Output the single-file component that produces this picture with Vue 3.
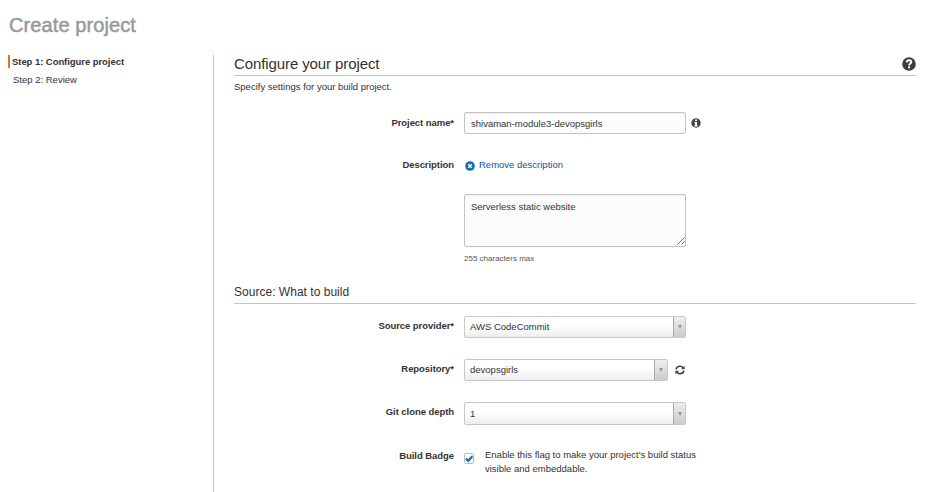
<script setup>
import { ref } from 'vue'

const projectName = ref('shivaman-module3-devopsgirls')
const description = ref('Serverless static website')
const badge = ref(true)
</script>

<template>
  <div class="page">
    <h1>Create project</h1>
    <div class="columns">
      <nav class="steps">
        <div class="step active">Step 1: Configure project</div>
        <div class="step">Step 2: Review</div>
      </nav>
      <main>
        <header class="section-head">
          <h2>Configure your project</h2>
          <svg class="help" viewBox="0 0 14 14">
            <circle cx="7" cy="7" r="6.8" fill="#3d3d3d" />
            <path d="M4.700 5.400C4.800 3.900 5.700 3.300 7 3.300c1.400 0 2.300.7 2.300 1.800C9.300 6.600 7.100 6.600 7.100 8.400" fill="none" stroke="#fff" stroke-width="1.900" />
            <rect x="6.100" y="9.400" width="2" height="1.900" fill="#fff" />
          </svg>
        </header>
        <p class="intro">Specify settings for your build project.</p>

        <div class="row name-row">
          <label>Project name*</label>
          <input v-model="projectName" class="field" type="text" spellcheck="false" />
          <svg class="info" viewBox="0 0 10 10">
            <circle cx="5" cy="5" r="4.700" fill="#444" />
            <path d="M4.100 1.400h1.900v1.600H4.100zM3.300 3.900h2.700v3.300h.8v1.200H3.300V7.200h.8V5h-.8z" fill="#fff" />
          </svg>
        </div>
        <div class="row desc-row">
          <label>Description</label>
          <a class="remove">
            <svg viewBox="0 0 10 10">
              <circle cx="5" cy="5" r="4.800" fill="#146eb4" />
              <path d="M3.300 3.300l3.400 3.400M6.700 3.300L3.300 6.700" stroke="#fff" stroke-width="1.500" />
            </svg>
            <span>Remove description</span>
          </a>
        </div>
        <div class="row area-row">
          <label></label>
          <div class="area-wrap">
            <textarea v-model="description" class="field" spellcheck="false"></textarea>
            <svg class="grip" viewBox="0 0 8 8">
              <path d="M.5 7.500l7-7M4.500 7.500l3-3" stroke="#555" stroke-width=".9" />
            </svg>
            <div class="hint">255 characters max</div>
          </div>
        </div>

        <header class="section-head sub">
          <h3>Source: What to build</h3>
        </header>

        <div class="row source-row">
          <label>Source provider*</label>
          <div class="select"><span>AWS CodeCommit</span><i><b></b></i></div>
        </div>
        <div class="row repo-row">
          <label>Repository*</label>
          <div class="select short"><span>devopsgirls</span><i><b></b></i></div>
          <svg class="refresh" viewBox="0 0 10 10">
            <g fill="none" stroke="#3d3d3d" stroke-width="1.500">
              <path d="M1 4.300C1.500 2.300 3.100 1.300 5 1.300c1.300 0 2.300.5 3.100 1.400" />
              <path d="M9 5.700C8.500 7.700 6.900 8.700 5 8.700c-1.300 0-2.300-.5-3.100-1.400" />
            </g>
            <path d="M9.600.8v3.500H6.100zM.4 9.200V5.700h3.500z" fill="#3d3d3d" />
          </svg>
        </div>
        <div class="row depth-row">
          <label>Git clone depth</label>
          <div class="select tall"><span>1</span><i><b></b></i></div>
        </div>
        <div class="row badge-row">
          <label>Build Badge</label>
          <div class="check" @click="badge = !badge">
            <svg v-if="badge" viewBox="0 0 8 9">
              <path d="M1 4.600l2.200 2.200 4.200-4.600" fill="none" stroke="#146eb4" stroke-width="2.200" />
            </svg>
          </div>
          <div class="check-text">Enable this flag to make your project's build status<br />visible and embeddable.</div>
        </div>
      </main>
    </div>
  </div>
</template>

<style>
body {
  background: #fff;
  overflow: hidden;
}
</style>

<style scoped>
.page {
  box-sizing: border-box;
  width: 940px;
  height: 492px;
  overflow: hidden;
  font: 9.5px/14px "Liberation Sans", Arial, sans-serif;
  color: #333;
}
h1 {
  margin: 0;
  padding: 13px 0 0 9px;
  height: 42px;
  font-size: 20px;
  line-height: 24px;
  font-weight: 400;
  letter-spacing: 0.1px;
  color: #999;
  -webkit-text-stroke: 0.5px #999;
}
.columns {
  display: flex;
  height: 437px;
}
.steps {
  box-sizing: border-box;
  width: 214px;
  padding-left: 8px;
  border-right: 1px solid #c4c4c4;
}
.step {
  height: 13px;
  margin-bottom: 5px;
  padding-left: 5px;
  line-height: 13px;
}
.step.active {
  padding-left: 2px;
  border-left: 2px solid #e47325;
  font-weight: 700;
  letter-spacing: -0.06px;
}
main {
  width: 682px;
  padding-left: 20px;
}
.section-head {
  box-sizing: border-box;
  display: flex;
  justify-content: space-between;
  height: 21px;
  border-bottom: 1px solid #c5c5c5;
}
h2,
h3 {
  margin: 0;
  font-weight: 400;
}
h2 {
  font-size: 15px;
  line-height: 18px;
  letter-spacing: -0.1px;
}
.help {
  width: 14px;
  height: 14px;
  margin-top: 2px;
}
.intro {
  margin: 4px 0 0;
  height: 32px;
}
.row {
  display: flex;
  align-items: flex-start;
}
label {
  width: 220px;
  margin-right: 10px;
  padding-top: 3px;
  text-align: right;
  font-weight: 700;
  letter-spacing: -0.06px;
}
.field {
  box-sizing: border-box;
  display: block;
  width: 222px;
  margin: 0;
  border: 1px solid #c2c2c2;
  border-radius: 2px;
  background: #fcfcfc;
  box-shadow: inset 0 1px 1px rgba(0, 0, 0, 0.05);
  font: inherit;
  color: #333;
  outline: none;
  resize: none;
}
input.field {
  height: 22px;
  padding: 1px 6px 0;
}
textarea.field {
  height: 53px;
  padding: 5px 6px;
  overflow: hidden;
}
.name-row {
  height: 43px;
}
.name-row label {
  padding-top: 4px;
}
.info {
  width: 10px;
  height: 10px;
  margin: 6px 0 0 5px;
}
.desc-row {
  height: 39px;
}
.remove {
  display: flex;
  padding: 3px 0 0 1px;
  color: #0c559c;
}
.remove svg {
  width: 10px;
  height: 10px;
  margin: 3px 4px 0 0;
}
.area-row {
  height: 88px;
}
.area-wrap {
  position: relative;
}
.grip {
  position: absolute;
  left: 213px;
  top: 43px;
  width: 8px;
  height: 8px;
}
.hint {
  margin-top: 6px;
  font-size: 8px;
  line-height: 12px;
  color: #555;
}
.sub {
  height: 22px;
}
h3 {
  font-size: 12px;
  line-height: 20px;
  letter-spacing: 0.02px;
}
.source-row {
  height: 43px;
  margin-top: 12px;
}
.select {
  box-sizing: border-box;
  display: flex;
  width: 222px;
  height: 22px;
  border: 1px solid #c8c8c8;
  border-radius: 2px;
  background: linear-gradient(#fff 40%, #eee);
  line-height: 20px;
}
.select.short {
  width: 204px;
}
.select.tall {
  height: 23px;
  line-height: 22px;
}
.select span {
  flex: 1;
  padding-left: 5px;
}
.select i {
  display: flex;
  align-items: center;
  justify-content: center;
  width: 11px;
  border-left: 1px solid #aaa;
  background: linear-gradient(#eee, #ccc);
}
.select.short i {
  width: 12px;
}
.select b {
  border: 2px solid transparent;
  border-top: 4px solid #999;
  border-bottom: 0;
}
.repo-row,
.depth-row {
  height: 43px;
}
.refresh {
  width: 10px;
  height: 10px;
  margin: 6px 0 0 7px;
}
.badge-row label {
  padding-top: 4px;
}
.check {
  box-sizing: border-box;
  width: 10px;
  height: 11px;
  margin-top: 8px;
  border: 1px solid #bbb;
  border-radius: 2px;
}
.check svg {
  display: block;
  width: 8px;
  height: 9px;
}
.check-text {
  margin: 3px 0 0 11px;
}
</style>
